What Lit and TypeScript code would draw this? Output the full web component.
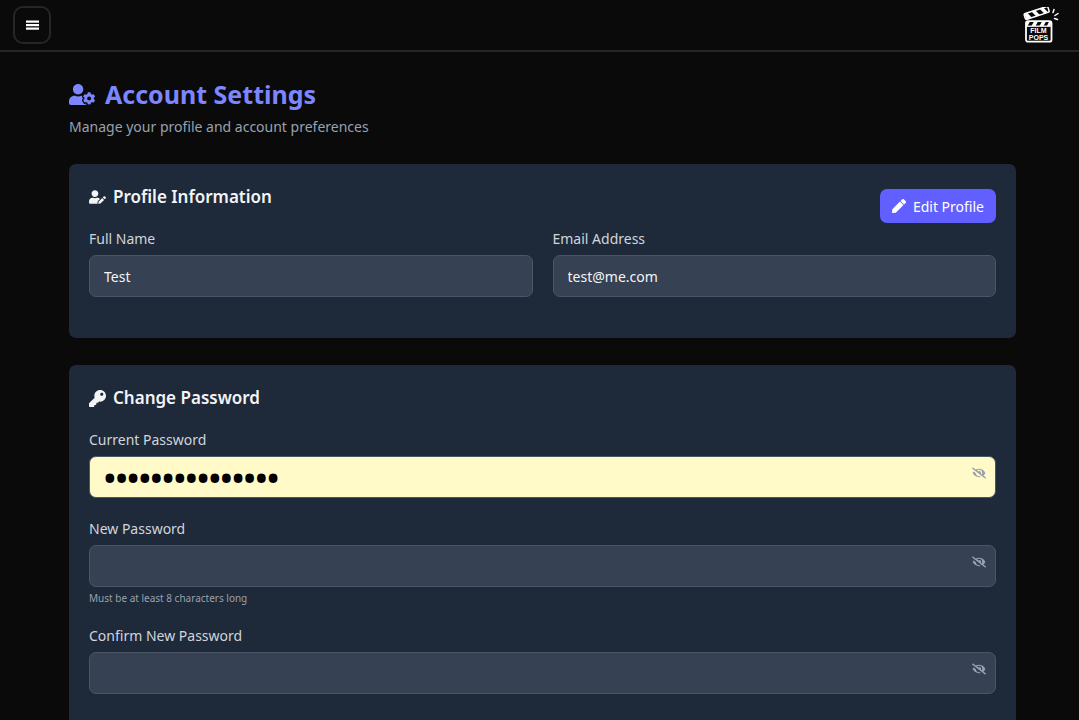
import { LitElement, html, css, svg } from "lit";
import { customElement, property, state } from "lit/decorators.js";

const icons = {
  userCog: {
    box: "0 0 640 512",
    d: "M610.5 373.3c2.6-14.1 2.6-28.5 0-42.6l25.8-14.9c3-1.7 4.3-5.2 3.3-8.5-6.7-21.6-18.2-41.2-33.2-57.4-2.3-2.5-6-3.1-9-1.4l-25.8 14.9c-10.9-9.3-23.4-16.5-36.9-21.3v-29.8c0-3.4-2.4-6.4-5.7-7.1-22.3-5-45-4.8-66.2 0-3.3.7-5.7 3.7-5.7 7.1v29.8c-13.5 4.8-26 12-36.9 21.3l-25.8-14.9c-2.9-1.7-6.7-1.1-9 1.4-15 16.2-26.5 35.8-33.2 57.4-1 3.3.4 6.8 3.3 8.5l25.8 14.9c-2.6 14.1-2.6 28.5 0 42.6l-25.8 14.9c-3 1.7-4.3 5.2-3.3 8.5 6.7 21.6 18.2 41.1 33.2 57.4 2.3 2.5 6 3.1 9 1.4l25.8-14.9c10.9 9.3 23.4 16.5 36.9 21.3v29.8c0 3.4 2.4 6.4 5.7 7.1 22.3 5 45 4.8 66.2 0 3.3-.7 5.7-3.7 5.7-7.1v-29.8c13.5-4.8 26-12 36.9-21.3l25.8 14.9c2.9 1.7 6.7 1.1 9-1.4 15-16.2 26.5-35.8 33.2-57.4 1-3.3-.4-6.8-3.3-8.5l-25.8-14.9zM496 400.5c-26.8 0-48.5-21.8-48.5-48.5s21.8-48.5 48.5-48.5 48.5 21.8 48.5 48.5-21.7 48.5-48.5 48.5zM224 256c70.7 0 128-57.3 128-128S294.7 0 224 0 96 57.3 96 128s57.3 128 128 128zm201.2 226.5c-2.3-1.2-4.6-2.6-6.8-3.9l-7.9 4.6c-6 3.4-12.8 5.3-19.6 5.3-10.9 0-21.4-4.6-28.9-12.6-18.3-19.8-32.3-43.9-40.2-69.6-5.5-17.7 1.9-36.4 17.9-45.7l7.9-4.6c-.1-2.6-.1-5.2 0-7.8l-7.9-4.6c-16-9.2-23.4-28-17.9-45.7.9-2.9 2.2-5.8 3.2-8.7-3.8-.3-7.5-1.2-11.4-1.2h-16.7c-22.2 10.2-46.9 16-72.9 16s-50.6-5.8-72.9-16h-16.7C60.2 288 0 348.2 0 422.4V464c0 26.5 21.5 48 48 48h352c10.1 0 19.5-3.2 27.2-8.5-1.2-3.8-2-7.7-2-11.8v-9.2z",
  },
  userEdit: {
    box: "0 0 640 512",
    d: "M224 256c70.7 0 128-57.3 128-128S294.7 0 224 0 96 57.3 96 128s57.3 128 128 128zm89.6 32h-16.7c-22.2 10.2-46.9 16-72.9 16s-50.6-5.8-72.9-16h-16.7C60.2 288 0 348.2 0 422.4V464c0 26.5 21.5 48 48 48h274.9c-2.4-6.8-3.4-14-2.6-21.3l6.8-60.9 1.2-11.1 7.9-7.9 77.3-77.3c-24.5-27.7-60-45.5-99.9-45.5zm45.3 145.3l-6.8 61c-1.1 10.2 7.5 18.8 17.6 17.6l60.9-6.8 137.9-137.9-71.7-71.7-137.9 137.8zM633 268.9L595.1 231c-9.3-9.3-24.5-9.3-33.8 0l-37.8 37.8-4.1 4.1 71.8 71.7 41.8-41.8c9.3-9.4 9.3-24.5 0-33.9z",
  },
  key: {
    box: "0 0 512 512",
    d: "M512 176.001C512 273.203 433.202 352 336 352c-11.22 0-22.19-1.062-32.827-3.069l-24.012 27.014A23.999 23.999 0 0 1 261.223 384H224v40c0 13.255-10.745 24-24 24h-40v40c0 13.255-10.745 24-24 24H24c-13.255 0-24-10.745-24-24v-78.059c0-6.365 2.529-12.47 7.029-16.971l161.802-161.802C163.108 213.814 160 195.271 160 176 160 78.798 238.797.001 335.999 0 433.488-.001 512 78.511 512 176.001zM336 128c0 26.51 21.49 48 48 48s48-21.49 48-48-21.49-48-48-48-48 21.49-48 48z",
  },
  pen: {
    box: "0 0 512 512",
    d: "M290.74 93.24l128.02 128.02-277.99 277.99-114.14 12.6C11.35 513.54-1.56 500.62.14 485.34l12.7-114.22 277.9-277.88zm207.2-19.06l-60.11-60.11c-18.75-18.75-49.16-18.75-67.91 0l-56.55 56.55 128.02 128.02 56.55-56.55c18.75-18.76 18.75-49.16 0-67.91z",
  },
  eyeSlash: {
    box: "0 0 640 512",
    d: "M320 400c-75.85 0-137.25-58.71-142.9-133.11L72.2 185.82c-13.79 17.3-26.48 35.59-36.72 55.59a32.35 32.35 0 0 0 0 29.19C89.71 376.41 197.07 448 320 448c26.91 0 52.87-4 77.89-10.46L346 397.39a144.13 144.13 0 0 1-26 2.61zm313.82 58.1l-110.55-85.44a331.25 331.25 0 0 0 81.25-102.07 32.35 32.35 0 0 0 0-29.19C550.29 135.59 442.93 64 320 64a308.15 308.15 0 0 0-147.32 37.7L45.46 3.37A16 16 0 0 0 23 6.18L3.37 31.45A16 16 0 0 0 6.18 53.9l588.36 454.73a16 16 0 0 0 22.46-2.81l19.64-25.27a16 16 0 0 0-2.82-22.45zm-183.72-142l-39.3-30.38A94.75 94.75 0 0 0 416 256a94.76 94.76 0 0 0-121.31-92.21A47.65 47.65 0 0 1 304 192a46.64 46.64 0 0 1-1.54 10l-73.61-56.89A142.31 142.31 0 0 1 320 112a143.92 143.92 0 0 1 144 144c0 21.63-5.29 41.79-13.9 60.11z",
  },
};

function icon(name: keyof typeof icons, cls: string) {
  const { box, d } = icons[name];
  return html`<svg class=${cls} viewBox=${box} fill="currentColor" aria-hidden="true">${svg`<path d=${d}></path>`}</svg>`;
}

const controls = css`
  * {
    box-sizing: border-box;
  }
  label {
    display: block;
    font-size: 14px;
    line-height: 20px;
    margin-bottom: 6px;
    color: #d1d5dc;
  }
  input {
    display: block;
    width: 100%;
    height: 42px;
    padding: 0 14px;
    border: 1px solid #4a5565;
    border-radius: 7px;
    background: #364153;
    color: #f3f4f6;
    font: inherit;
    font-size: 14px;
    outline: none;
  }
  button {
    font: inherit;
    cursor: pointer;
  }
`;

@customElement("password-field")
class PasswordField extends LitElement {
  @property() label = "";
  @property() value = "";
  @property() hint = "";
  @property({ type: Boolean }) autofilled = false;
  @state() private shown = false;

  static styles = [
    controls,
    css`
      :host {
        display: block;
      }
      .box {
        position: relative;
      }
      input {
        padding-right: 40px;
      }
      input[type="password"] {
        font-size: 31px;
        font-weight: 700;
      }
      .autofilled {
        background: #fffac8;
        color: #000;
      }
      .toggle {
        position: absolute;
        top: 11px;
        right: 10px;
        display: flex;
        padding: 0;
        border: 0;
        background: none;
        color: #99a1af;
      }
      .eye {
        width: 14px;
        height: 12px;
      }
      .hint {
        margin: 4px 0 0;
        font-size: 10px;
        line-height: 14px;
        color: #99a1af;
      }
    `,
  ];

  render() {
    return html`
      <label for="field">${this.label}</label>
      <div class="box">
        <input
          id="field"
          class=${this.autofilled ? "autofilled" : ""}
          type=${this.shown ? "text" : "password"}
          .value=${this.value}
        />
        <button class="toggle" type="button" aria-label="Toggle password visibility" @click=${() => (this.shown = !this.shown)}>
          ${icon("eyeSlash", "eye")}
        </button>
      </div>
      ${this.hint ? html`<p class="hint">${this.hint}</p>` : ""}
    `;
  }
}

@customElement("app-root")
class AppRoot extends LitElement {
  static styles = [
    controls,
    css`
      :host {
        display: block;
        min-height: 100vh;
        background: #0a0a0a;
        color: #f3f4f6;
        font-family: "Noto Sans", sans-serif;
        font-size: 14px;
      }
      .topbar {
        display: flex;
        align-items: center;
        justify-content: space-between;
        height: 52px;
        padding: 0 20px 0 13px;
        border-bottom: 2px solid #262626;
      }
      .menu {
        display: grid;
        place-items: center;
        width: 38px;
        height: 38px;
        padding: 0;
        border: 2px solid #262626;
        border-radius: 10px;
        background: none;
        color: #fff;
      }
      .bars {
        width: 13px;
        height: 10px;
      }
      .logo {
        display: flex;
        color: #fff;
      }
      .clapper {
        width: 36px;
        height: 36px;
      }
      .page {
        padding: 27px 63px 28px 69px;
      }
      .title {
        display: flex;
        align-items: center;
        gap: 10px;
        margin: 0;
        font-size: 25px;
        line-height: 30px;
        font-weight: 700;
        color: #7c86ff;
      }
      .title-icon {
        width: 26px;
        height: 21px;
      }
      .subtitle {
        margin: 8px 0 27px;
        line-height: 20px;
        color: #99a1af;
      }
      .card {
        padding: 20px 20px 41px;
        margin-bottom: 27px;
        border-radius: 7px;
        background: #1e2939;
      }
      .card-head {
        display: flex;
        justify-content: space-between;
        align-items: flex-start;
        margin-bottom: 6px;
      }
      .heading {
        display: flex;
        align-items: center;
        gap: 7px;
        margin: 0;
        font-size: 17px;
        line-height: 26px;
        font-weight: 600;
        color: #f3f4f6;
      }
      .wide-icon {
        width: 17px;
        height: 14px;
      }
      .square-icon {
        width: 17px;
        height: 17px;
      }
      .edit {
        display: flex;
        align-items: center;
        gap: 7px;
        height: 34px;
        margin-top: 5px;
        padding: 0 12px;
        border: 0;
        border-radius: 7px;
        background: #615fff;
        color: #fff;
      }
      .pen {
        width: 14px;
        height: 14px;
      }
      .columns {
        display: grid;
        grid-template-columns: 1fr 1fr;
        gap: 20px;
      }
      .fields {
        display: grid;
        gap: 21px;
        margin-top: 19px;
      }
    `,
  ];

  render() {
    return html`
      <header class="topbar">
        <button class="menu" type="button" aria-label="Open menu">
          <svg class="bars" viewBox="0 0 13 10" fill="currentColor" aria-hidden="true">
            <rect y="0.5" width="13" height="2.2"></rect>
            <rect y="4" width="13" height="2.2"></rect>
            <rect y="7.5" width="13" height="2.2"></rect>
          </svg>
        </button>
        <a class="logo" href="#" aria-label="Film Pops">
          <svg class="clapper" viewBox="0 0 36 36" aria-hidden="true">
            <rect x="3" y="14.200" width="25.500" height="20.500" rx="2" fill="none" stroke="currentColor" stroke-width="1.800"></rect>
            <path d="M3 19.200h25" stroke="currentColor" stroke-width="1.300"></path>
            <path d="M3 14.500h4l-2.500 4.500H3zM11 14.500h4l-2.500 4.500h-4zM19 14.500h4l-2.500 4.500h-4zM26 14.500h2v3l-1 1.500h-3z" fill="currentColor"></path>
            <g transform="rotate(-18 3 12)">
              <rect x="2.500" y="6.500" width="25" height="6" rx="1.500" fill="none" stroke="currentColor" stroke-width="1.500"></rect>
              <path d="M3 6.500h3l3 6H3zM10.500 6.500h4l3 6h-4zM19 6.500h4l3 6h-4z" fill="currentColor"></path>
            </g>
            <path d="M30 5.500l1-3M32 8.500l3-2M31.500 11.500l3 1" stroke="currentColor" stroke-width="1.500" stroke-linecap="round"></path>
            <g fill="currentColor" font-family="Liberation Sans, sans-serif" font-weight="700" font-size="7" text-anchor="middle">
              <text x="15.500" y="26">FILM</text>
              <text x="15.500" y="33">POPS</text>
            </g>
          </svg>
        </a>
      </header>
      <main class="page">
        <h1 class="title">${icon("userCog", "title-icon")}Account Settings</h1>
        <p class="subtitle">Manage your profile and account preferences</p>

        <section class="card">
          <div class="card-head">
            <h2 class="heading">${icon("userEdit", "wide-icon")}Profile Information</h2>
            <button class="edit" type="button">${icon("pen", "pen")}Edit Profile</button>
          </div>
          <div class="columns">
            <div>
              <label for="name">Full Name</label>
              <input id="name" type="text" value="Test" />
            </div>
            <div>
              <label for="email">Email Address</label>
              <input id="email" type="email" value="test@me.com" />
            </div>
          </div>
        </section>

        <section class="card">
          <h2 class="heading">${icon("key", "square-icon")}Change Password</h2>
          <form class="fields">
            <password-field label="Current Password" value="moviepopcorn123" autofilled></password-field>
            <password-field label="New Password" hint="Must be at least 8 characters long"></password-field>
            <password-field label="Confirm New Password"></password-field>
          </form>
        </section>
      </main>
    `;
  }
}
